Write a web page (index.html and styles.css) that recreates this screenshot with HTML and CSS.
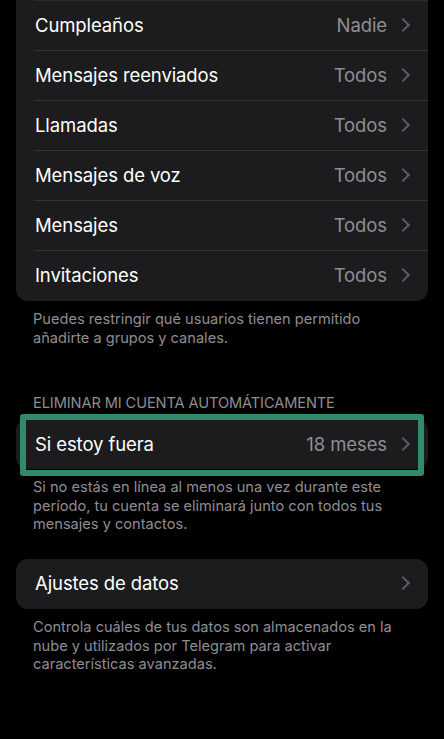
FILE: index.html
```html
<!DOCTYPE html>
<html lang="es">
<head>
    <meta charset="UTF-8">
    <meta name="viewport" content="width=device-width, initial-scale=1.0">
    <title>Privacidad y seguridad</title>
    <link rel="stylesheet" href="styles.css">
</head>
<body>
    <div class="screen">
        <!-- Privacidad: lista desplazada -->
        <div class="group group-cut">
            <div class="row"><div class="row-body"><span class="label">Cumpleaños</span><span class="value">Nadie</span><span class="chev"></span></div></div>
            <div class="row"><div class="row-body"><span class="label">Mensajes reenviados</span><span class="value">Todos</span><span class="chev"></span></div></div>
            <div class="row"><div class="row-body"><span class="label">Llamadas</span><span class="value">Todos</span><span class="chev"></span></div></div>
            <div class="row"><div class="row-body"><span class="label">Mensajes de voz</span><span class="value">Todos</span><span class="chev"></span></div></div>
            <div class="row"><div class="row-body"><span class="label">Mensajes</span><span class="value">Todos</span><span class="chev"></span></div></div>
            <div class="row"><div class="row-body"><span class="label">Invitaciones</span><span class="value">Todos</span><span class="chev"></span></div></div>
        </div>
        <p class="note">Puedes restringir qué usuarios tienen permitido añadirte a grupos y canales.</p>

        <!-- Eliminar cuenta -->
        <h3 class="group-title">Eliminar mi cuenta automáticamente</h3>
        <div class="group group-marked">
            <div class="row"><div class="row-body"><span class="label">Si estoy fuera</span><span class="value">18 meses</span><span class="chev"></span></div></div>
            <div class="highlight"></div>
        </div>
        <p class="note">Si no estás en línea al menos una vez durante este período, tu cuenta se eliminará junto con todos tus mensajes y contactos.</p>

        <!-- Datos -->
        <div class="group group-data">
            <div class="row"><div class="row-body"><span class="label">Ajustes de datos</span><span class="value"></span><span class="chev"></span></div></div>
        </div>
        <p class="note">Controla cuáles de tus datos son almacenados en la nube y utilizados por Telegram para activar características avanzadas.</p>
    </div>
</body>
</html>
```

FILE: styles.css
```css
body {
    margin: 0;
    background-color: #000;
    color: #fff;
    font-family: Inter, Roboto, 'Noto Sans', sans-serif;
    overflow: hidden;
}
.screen {
    padding: 0 16px;
}
.group {
    background: #1c1c1e;
    border-radius: 12px;
}
.group-cut {
    padding-bottom: 1px;
    border-top-left-radius: 0;
    border-top-right-radius: 0;
}
.row {
    padding-left: 18px;
}
.row-body {
    box-sizing: border-box;
    display: flex;
    align-items: center;
    height: 50px;
    padding-right: 17px;
    padding-bottom: 1px;
    border-top: 1px solid #333336;
}
.row:first-child .row-body {
    border-top: none;
}
.group-cut .row:first-child .row-body {
    border-top: 1px solid #2a2a2d;
}
.label {
    flex: 1;
    font-size: 18.5px;
    letter-spacing: -0.1px;
    padding-left: 1px;
}
.value {
    color: #8e8e93;
    font-size: 18.5px;
    letter-spacing: -0.1px;
    margin-right: 11px;
}
.chev {
    width: 8px;
    height: 8px;
    border-right: 2.4px solid #5c5c61;
    border-top: 2.4px solid #5c5c61;
    transform: rotate(45deg);
    margin-right: 3px;
}
.note {
    margin: 9px 0 0;
    padding: 0 17px;
    font-size: 14.6px;
    line-height: 18.6px;
    color: #8e8e93;
}
.group-title {
    margin: 47px 0 7px;
    padding: 0 17px;
    font-size: 14.6px;
    line-height: 18px;
    font-weight: 400;
    letter-spacing: -0.1px;
    text-transform: uppercase;
    color: #8e8e93;
}
.group-marked {
    position: relative;
}
.highlight {
    position: absolute;
    top: -5px;
    bottom: -7px;
    left: 4px;
    right: 4px;
    border: 6px solid #2f8a6e;
    border-radius: 3px;
}
.group-data {
    margin-top: 25px;
}
```
